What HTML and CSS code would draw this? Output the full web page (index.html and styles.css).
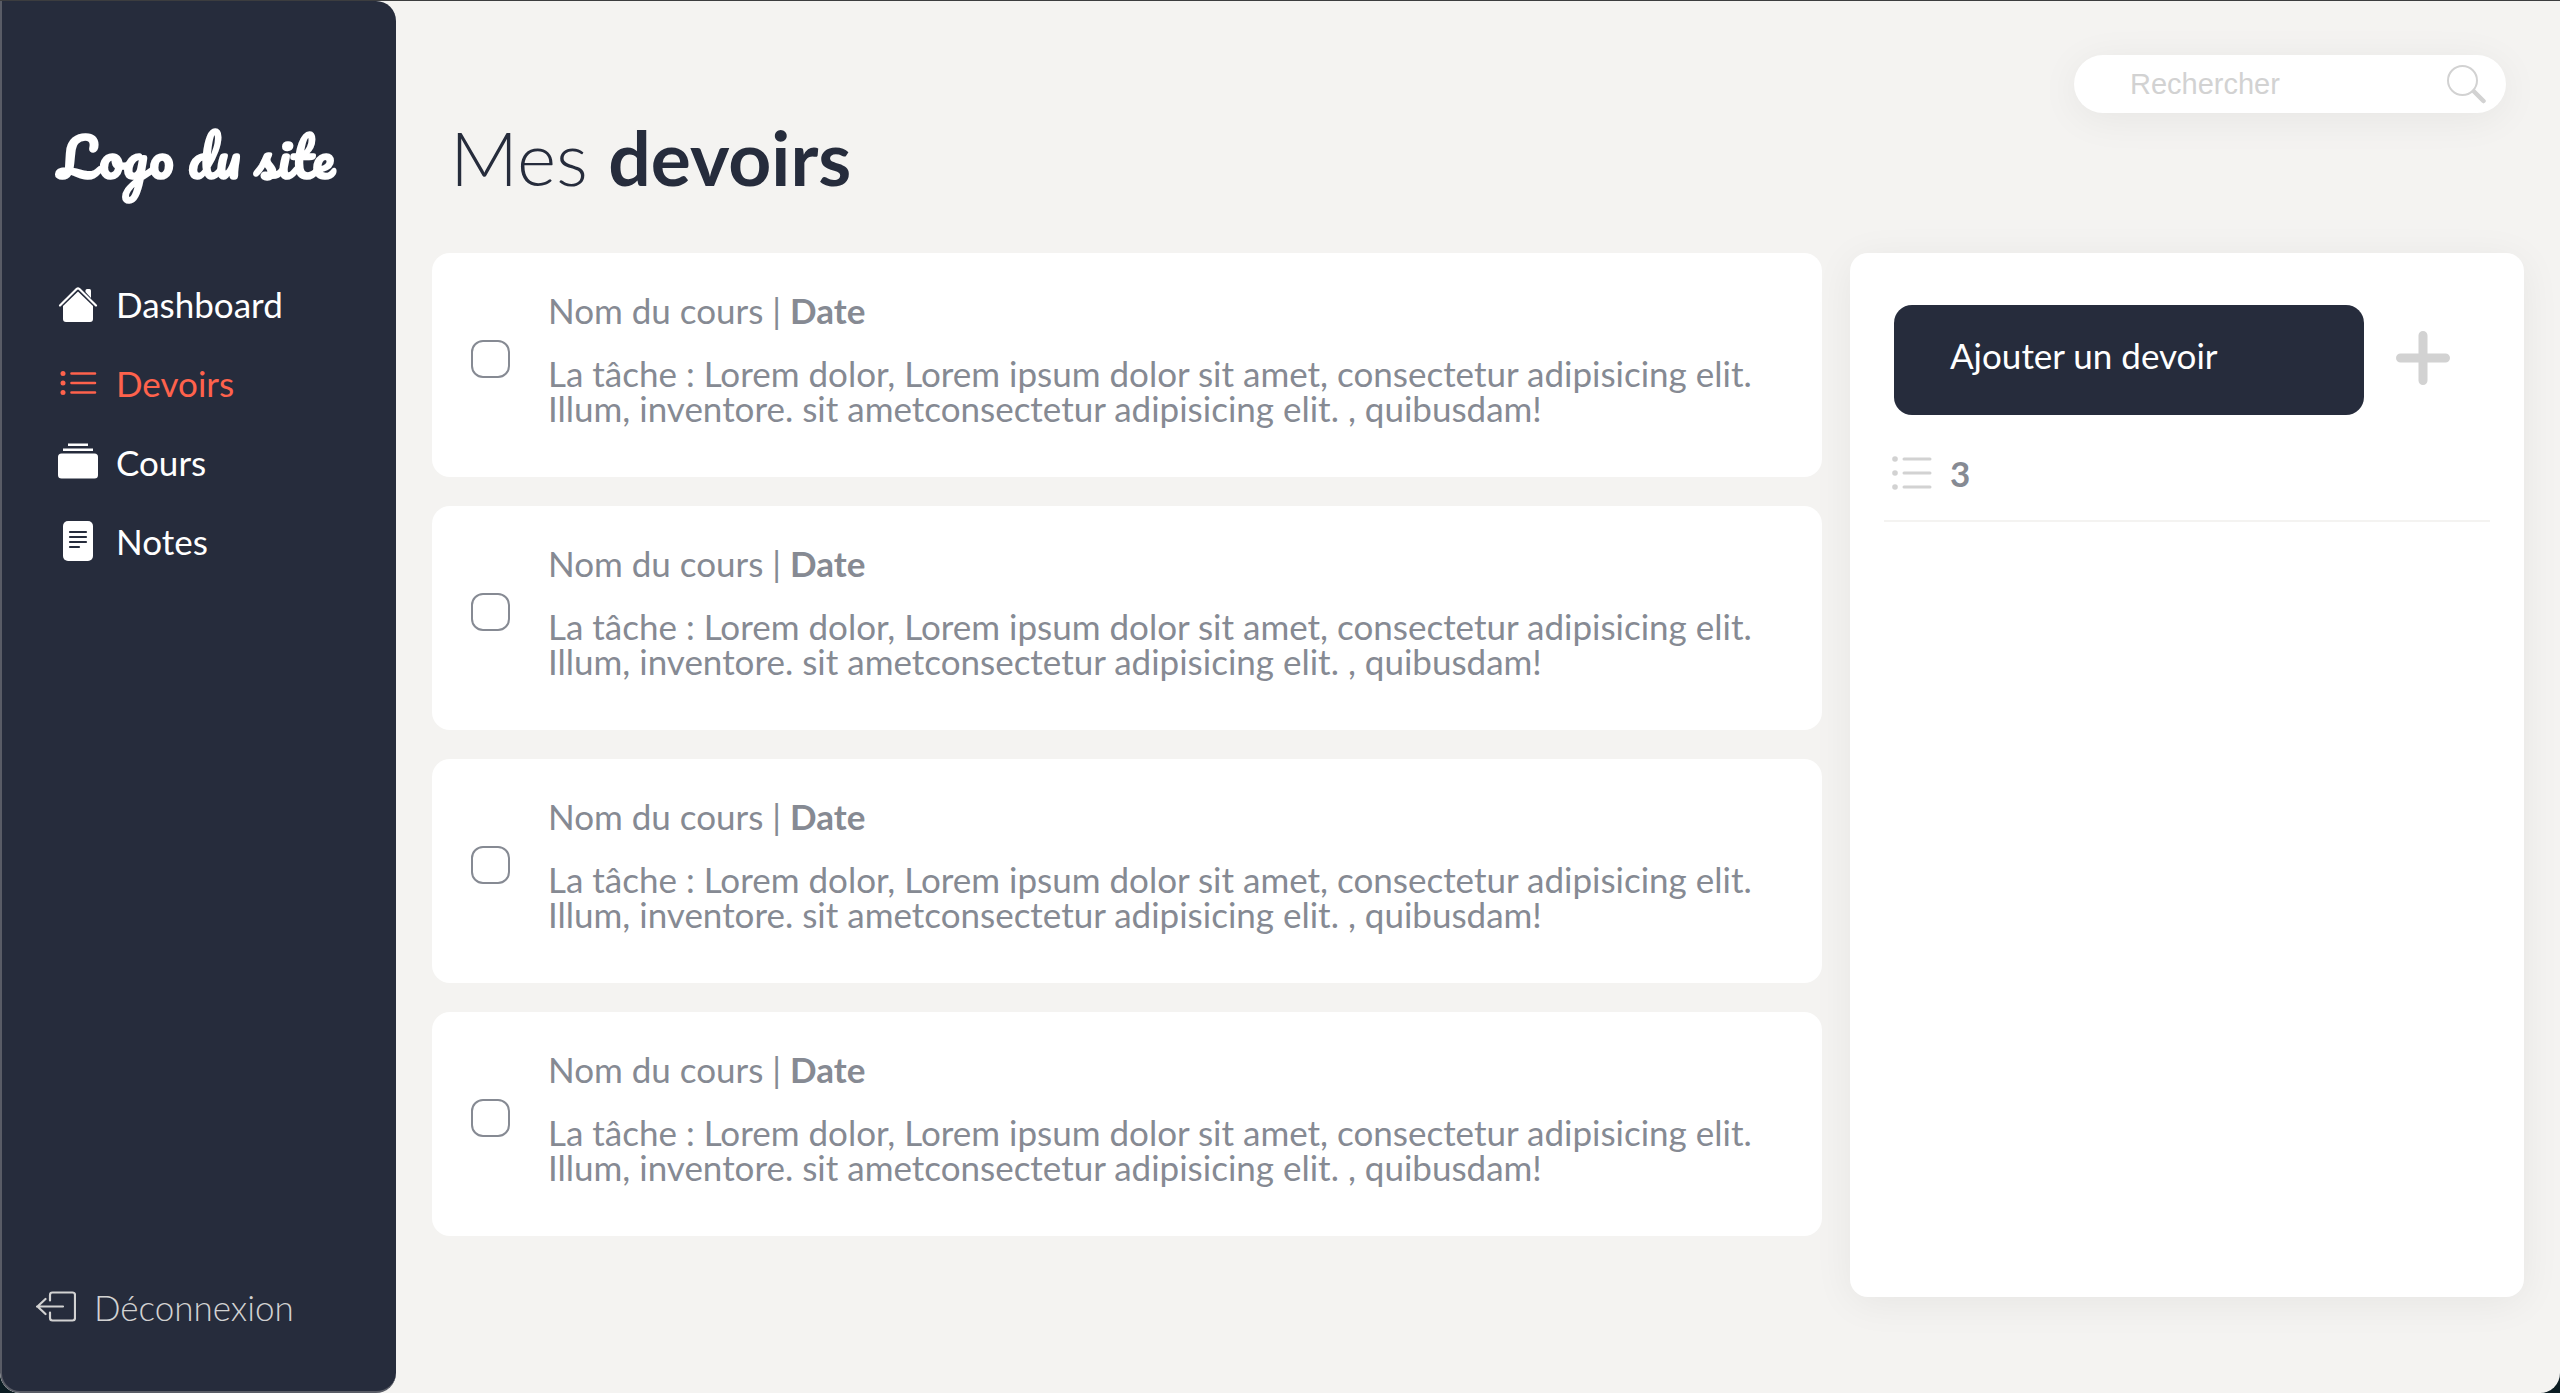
FILE: index.html
```html
<!DOCTYPE html>
<html lang="fr">
<head>
<meta charset="utf-8">
<title>Mes devoirs</title>
<link rel="stylesheet" href="styles.css">
</head>
<body>
<div class="app">
  <aside class="sidebar">
    <a class="logo" href="#">Logo du site</a>
    <nav class="nav">
      <a class="nav-link" href="#">
        <svg class="icon" viewBox="0 0 40 40" fill="currentColor"><path d="M20 7.500 35 22v13a3 3 0 0 1-3 3H8a3 3 0 0 1-3-3V22z"/><path d="M2 21.500 18.800 4.800q1.200-1 2.400 0L38 21.500" fill="none" stroke="currentColor" stroke-width="2.200" stroke-linecap="round"/><path d="M27.500 8V6.500q0-1.500 1.500-1.500h2.500q1.500 0 1.500 1.500V14z"/></svg>
        <span>Dashboard</span>
      </a>
      <a class="nav-link active" href="#">
        <svg class="icon" viewBox="0 0 40 40"><g fill="currentColor"><circle cx="5" cy="10.500" r="2.500"/><circle cx="5" cy="20" r="2.500"/><circle cx="5" cy="29.500" r="2.500"/></g><path d="M13.500 10.500h23.500M13.500 20h23.500M13.500 29.500h23.500" stroke="currentColor" stroke-width="2.600" stroke-linecap="round"/></svg>
        <span>Devoirs</span>
      </a>
      <a class="nav-link" href="#">
        <svg class="icon" viewBox="0 0 40 40" fill="currentColor"><path d="M10 1.500h20v2.500H10zM5 6.500h30v2.500H5z"/><rect y="11.500" width="40" height="25" rx="3.500"/></svg>
        <span>Cours</span>
      </a>
      <a class="nav-link" href="#">
        <svg class="icon" viewBox="0 0 40 40"><rect x="5" width="30" height="40" rx="5" fill="currentColor"/><path d="M12 11h16M12 16h16M12 21h16M12 26h9" stroke="#262c3c" stroke-width="2.200" stroke-linecap="round"/></svg>
        <span>Notes</span>
      </a>
    </nav>
    <a class="logout" href="#">
      <svg class="icon" viewBox="0 0 40 40" fill="none" stroke="currentColor" stroke-width="2.200" stroke-linecap="round" stroke-linejoin="round"><path d="M14 13.500V8q0-2.500 2.500-2.500h20q2.500 0 2.500 2.500v23q0 2.500-2.500 2.500h-20q-2.500 0-2.500-2.500V25.500M27 19.500H1M9.500 12l-8 7.500 8 7.500"/></svg>
      <span>Déconnexion</span>
    </a>
  </aside>
  <main class="main">
    <form class="search" role="search">
      <input class="search-input" type="text" placeholder="Rechercher" aria-label="Rechercher">
      <button class="search-button" type="button" aria-label="Lancer la recherche">
        <svg class="icon" viewBox="0 0 40 40" fill="none" stroke="currentColor" stroke-linecap="round"><circle cx="16.500" cy="16.500" r="14.500" stroke-width="2"/><path d="M28 27.500 37.500 37" stroke-width="4.500"/></svg>
      </button>
    </form>
    <h1 class="title">Mes <strong>devoirs</strong></h1>
    <div class="content">
      <ul class="tasks">
        <li class="task">
          <input class="check" type="checkbox" id="t1">
          <label class="task-body" for="t1"><span class="course">Nom du cours | <strong>Date</strong></span><span class="desc">La tâche : Lorem dolor, Lorem ipsum dolor sit amet, consectetur adipisicing elit.<br>Illum, inventore. sit ametconsectetur adipisicing elit. , quibusdam!</span></label>
        </li>
        <li class="task">
          <input class="check" type="checkbox" id="t2">
          <label class="task-body" for="t2"><span class="course">Nom du cours | <strong>Date</strong></span><span class="desc">La tâche : Lorem dolor, Lorem ipsum dolor sit amet, consectetur adipisicing elit.<br>Illum, inventore. sit ametconsectetur adipisicing elit. , quibusdam!</span></label>
        </li>
        <li class="task">
          <input class="check" type="checkbox" id="t3">
          <label class="task-body" for="t3"><span class="course">Nom du cours | <strong>Date</strong></span><span class="desc">La tâche : Lorem dolor, Lorem ipsum dolor sit amet, consectetur adipisicing elit.<br>Illum, inventore. sit ametconsectetur adipisicing elit. , quibusdam!</span></label>
        </li>
        <li class="task">
          <input class="check" type="checkbox" id="t4">
          <label class="task-body" for="t4"><span class="course">Nom du cours | <strong>Date</strong></span><span class="desc">La tâche : Lorem dolor, Lorem ipsum dolor sit amet, consectetur adipisicing elit.<br>Illum, inventore. sit ametconsectetur adipisicing elit. , quibusdam!</span></label>
        </li>
      </ul>
      <section class="panel">
        <div class="add-row">
          <button class="add" type="button">Ajouter un devoir</button>
          <button class="plus" type="button" aria-label="Ajouter">
            <svg class="plus-icon" viewBox="0 0 54 54" stroke="currentColor" stroke-width="9" stroke-linecap="round"><path d="M27 4.500v45M4.500 27h45"/></svg>
          </button>
        </div>
        <div class="count">
          <svg class="icon" viewBox="0 0 40 40"><g fill="currentColor"><circle cx="3" cy="6" r="2.800"/><circle cx="3" cy="20" r="2.800"/><circle cx="3" cy="34" r="2.800"/></g><path d="M12 6h26M12 20h26M12 34h26" stroke="currentColor" stroke-width="3" stroke-linecap="round"/></svg>
          <strong>3</strong>
        </div>
      </section>
    </div>
  </main>
</div>
</body>
</html>
```
FILE: styles.css
```css
* { box-sizing: border-box; }
body {
  margin: 0;
  background: #0b1c22;
  color: #868a93;
  font-family: Lato, "Open Sans", sans-serif;
  font-size: 35px;
  line-height: 35px;
}
a { color: inherit; text-decoration: none; }
button { border: 0; padding: 0; background: none; font: inherit; cursor: pointer; }
.icon { display: block; width: 40px; height: 40px; flex: none; }

.app {
  display: flex;
  min-height: 100vh;
  background: #f4f3f1;
  border-top: 1px solid #3c3d3f;
  border-radius: 0 0 20px 20px;
  overflow: hidden;
}
.sidebar {
  display: flex;
  flex-direction: column;
  flex: none;
  width: 396px;
  padding: 119px 0 64px 34px;
  background: #262c3c;
  border: solid #595c66;
  border-width: 0 0 2px 2px;
  border-radius: 0 20px 20px 20px;
  color: #fff;
}
.logo {
  padding-left: 22px;
  font-family: Pacifico, cursive;
  font-size: 54px;
  line-height: 72px;
  font-weight: 700;
}
.nav { display: grid; gap: 39px; margin-top: 92px; padding-left: 22px; }
.nav-link, .logout { display: flex; align-items: center; gap: 18px; height: 40px; }
.active { color: #fe624c; }
.logout { margin-top: auto; color: #d2d2d2; font-weight: 300; }

.main { flex: 1; min-width: 0; padding: 54px 36px 90px; }
.search {
  display: flex;
  align-items: center;
  justify-content: space-between;
  width: 432px;
  height: 58px;
  margin: 0 18px 0 auto;
  padding: 0 20px 0 56px;
  background: #fff;
  border-radius: 29px;
  box-shadow: 0 6px 40px rgba(0, 0, 0, .06);
}
.search-input {
  width: 260px;
  padding: 0;
  border: 0;
  outline: 0;
  background: none;
  font: 29px/36px "Liberation Sans", Arial, sans-serif;
}
.search-input::placeholder { color: #d2d2d2; opacity: 1; }
.search-button, .plus { color: #d2d2d2; }
.title {
  margin: 0 0 52px 18px;
  color: #262c3c;
  font-size: 75px;
  line-height: 88px;
  font-weight: 300;
}
.title strong { font-weight: 700; }
.content { display: flex; gap: 28px; }
.tasks { display: grid; align-content: start; gap: 29px; flex: 1; min-width: 0; margin: 0; padding: 0; list-style: none; }
.task {
  display: flex;
  align-items: center;
  gap: 38px;
  min-height: 224px;
  padding: 0 39px 12px;
  background: #fff;
  border-radius: 18px;
}
.check {
  appearance: none;
  flex: none;
  width: 39px;
  height: 38px;
  margin: 0;
  border: 2px solid #868a93;
  border-radius: 12px;
}
.check:checked { background: #868a93; }
.task-body { display: grid; gap: 28px; }
.panel {
  width: 674px;
  min-height: 1044px;
  padding: 52px 34px;
  background: #fff;
  border-radius: 18px;
  box-shadow: 0 6px 40px rgba(0, 0, 0, .06);
}
.add-row { display: flex; align-items: center; gap: 32px; padding-left: 10px; }
.add {
  width: 470px;
  height: 110px;
  padding: 0 56px 10px;
  background: #262c3c;
  border-radius: 18px;
  color: #fff;
  text-align: left;
}
.plus { padding-bottom: 4px; }
.plus-icon { display: block; width: 54px; height: 54px; }
.count {
  display: flex;
  align-items: center;
  gap: 18px;
  margin-top: 38px;
  padding: 0 8px 27px;
  border-bottom: 2px solid #f4f3f1;
}
.count .icon { color: #d2d2d2; }
```
